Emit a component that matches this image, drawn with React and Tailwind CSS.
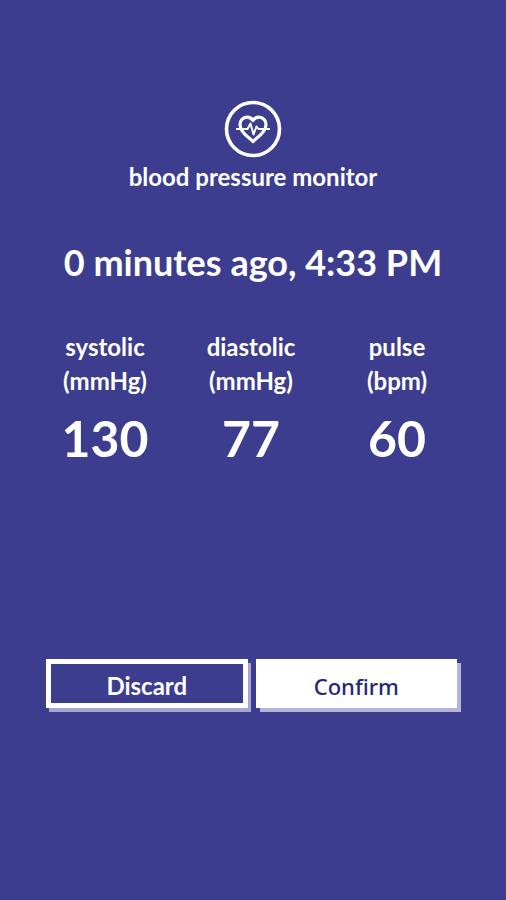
const readings = [
  { label: "systolic", unit: "mmHg", value: 130 },
  { label: "diastolic", unit: "mmHg", value: 77 },
  { label: "pulse", unit: "bpm", value: 60 },
];

function Logo() {
  return (
    <svg viewBox="0 0 58 58" className="w-[58px] h-[58px]" fill="none" stroke="white">
      <circle cx="29" cy="29" r="26.5" strokeWidth="3.6" />
      <path
        d="M29 20.5C27.5 18 25.5 17.2 23 17.2C19 17.2 16 20.5 16 24.5C16 31 22 35 29 41.5C36 35 42 31 42 24.5C42 20.5 39 17.2 35 17.2C32.5 17.2 30.5 18 29 20.5Z"
        strokeWidth="3.2"
        strokeLinejoin="round"
      />
      <path
        d="M12 29H23.5L26.5 23.5L29.5 34.5L32.5 26.5L34.5 29H46"
        strokeWidth="2"
        strokeLinejoin="round"
      />
    </svg>
  );
}

function Reading({ label, unit, value }) {
  return (
    <div className="flex flex-col items-center">
      <dt className="text-center text-[24px] leading-[34px]">
        {label}
        <br />({unit})
      </dt>
      <dd className="mt-3 text-[50px] leading-[56px]">{value}</dd>
    </div>
  );
}

function App() {
  return (
    <main className="min-h-screen bg-[#3d3d8f] pt-[100px] pb-12 text-white font-bold font-[Lato,sans-serif]">
      <header className="flex flex-col items-center">
        <Logo />
        <h1 className="mt-1 text-[24px] leading-[30px]">blood pressure monitor</h1>
      </header>

      <p className="mt-12 text-center text-[36px] leading-[44px]">
        0 minutes ago, 4:33 PM
      </p>

      <dl className="mt-[46px] grid grid-cols-3 pl-8 pr-9">
        {readings.map((r) => (
          <Reading key={r.label} {...r} />
        ))}
      </dl>

      <div className="mt-[193px] grid grid-cols-2 gap-2 pl-[46px] pr-[49px]">
        <button
          type="button"
          className="h-[49px] border-[5px] border-white pt-1 text-[24px] leading-[30px] shadow-[3px_4px_0_#a5a5d2]"
        >
          Discard
        </button>
        <button
          type="button"
          className="h-[49px] bg-white pt-1 text-[22px] leading-[30px] font-[Noto_Sans,sans-serif] font-medium text-[#25257d] shadow-[4px_4px_0_#b4b4da]"
        >
          Confirm
        </button>
      </div>
    </main>
  );
}

export default App;
